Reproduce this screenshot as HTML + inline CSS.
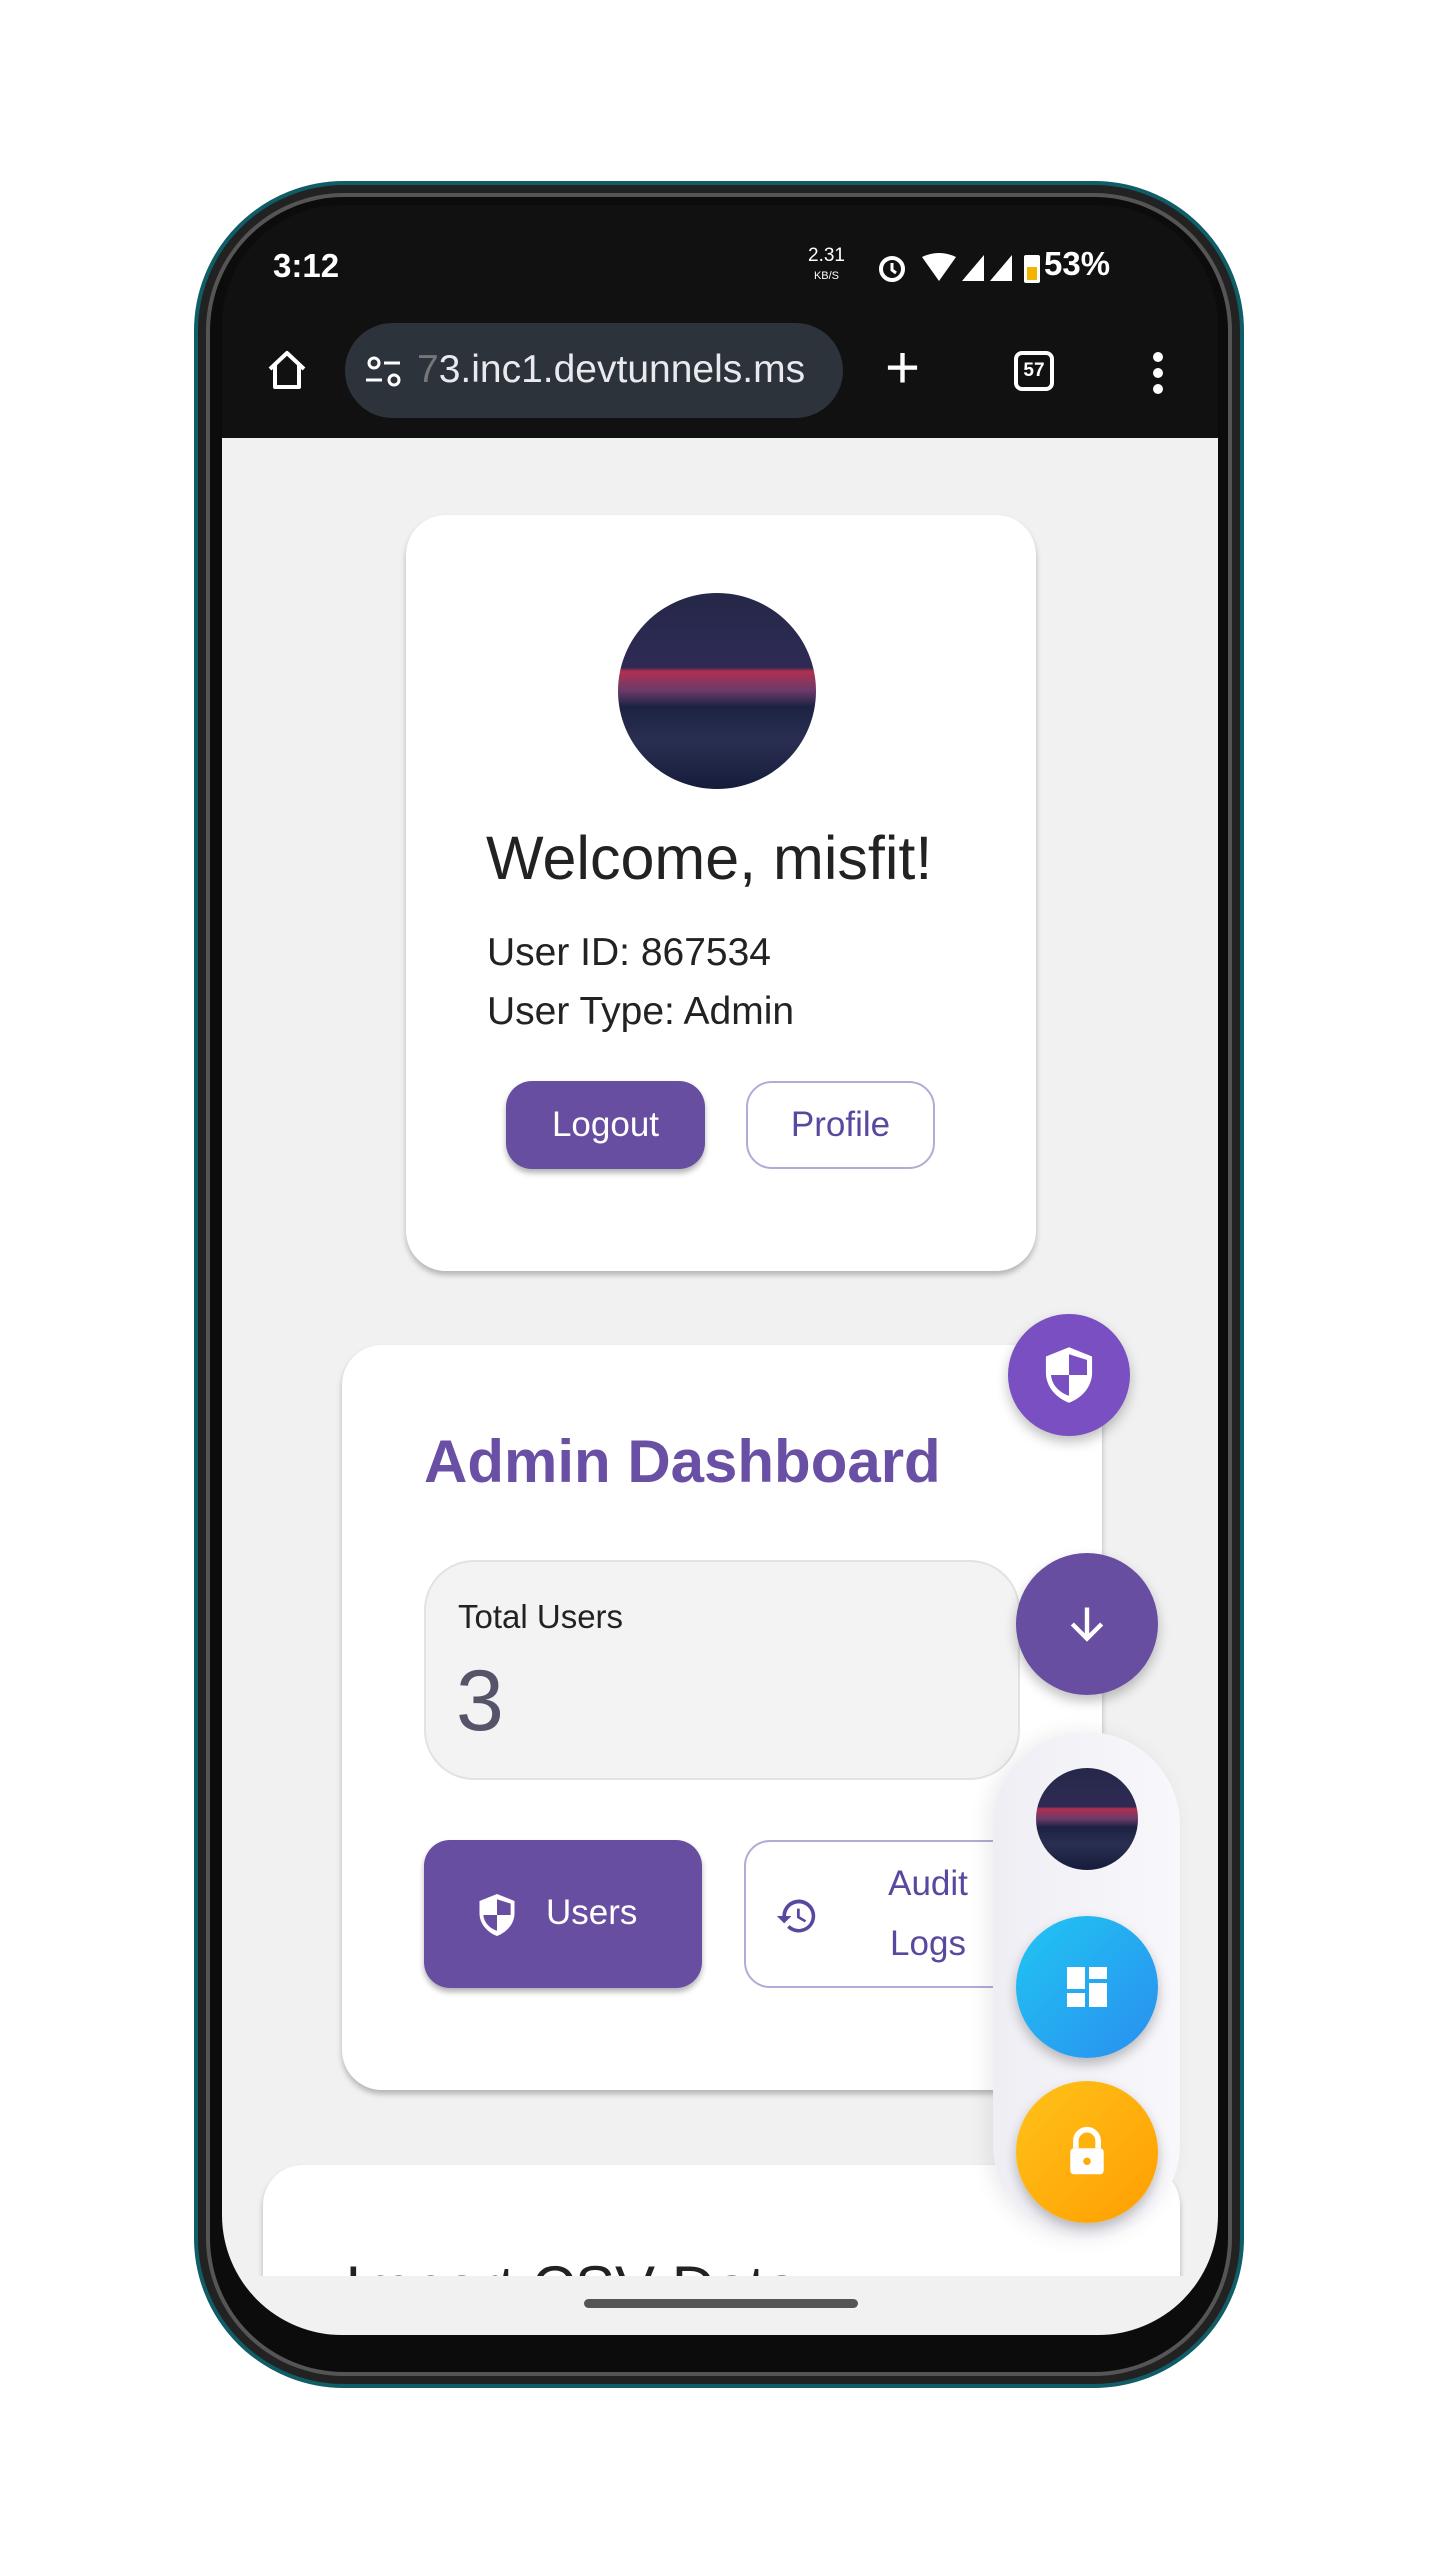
<!DOCTYPE html>
<html><head><meta charset="utf-8"><style>
*{margin:0;padding:0;box-sizing:border-box}
html,body{width:1440px;height:2565px;overflow:hidden}
body{background:#fff;position:relative;font-family:"Liberation Sans",sans-serif}
.a{position:absolute}
.phone{left:194px;top:181px;width:1050px;height:2207px;border-radius:150px;background:#0c0c0c;border:4px solid #0f5d66;box-shadow:inset 0 0 0 8px #222,inset 0 0 0 12px #555}
.screen{left:222px;top:205px;width:996px;height:2130px;border-radius:120px;background:#111;overflow:hidden}
.content{left:0;top:233px;width:996px;height:1838px;background:#f1f1f1;overflow:hidden}
.card{background:#fff;border-radius:40px;box-shadow:0 4px 6px rgba(0,0,0,.25)}
.fab{border-radius:50%;display:flex;align-items:center;justify-content:center;box-shadow:0 6px 12px rgba(0,0,0,.25)}
.av{border-radius:50%;background:linear-gradient(180deg,#252848 0%,#2e2a55 38%,#b03050 40%,#6a3a6a 50%,#1c2242 58%,#2a2f52 75%,#161c3a 100%)}
</style></head><body>
<div class="a phone"></div>
<div class="a screen">
  <div class="a" style="left:51px;top:42px;color:#fff;font-size:33px;font-weight:bold">3:12</div>
  <div class="a" style="left:586px;top:42px;color:#fff;font-size:19px;line-height:18px;text-align:center">2.31<br><span style="font-size:11px">KB/S</span></div>
  <svg class="a" style="left:650px;top:42px" width="300" height="40" viewBox="0 0 300 40">
    <circle cx="20" cy="22" r="11" fill="none" stroke="#fff" stroke-width="4"/><path d="M20 16v7l4 3" stroke="#fff" stroke-width="3" fill="none"/>
    <path d="M50 10 Q67 2 84 10 L67 34Z" fill="#fff"/>
    <path d="M90 34 L112 8 V34Z" fill="#fff"/><path d="M118 34 L140 8 V34Z" fill="#fff"/>
    <rect x="152" y="8" width="16" height="28" rx="2" fill="#fff"/><rect x="155" y="20" width="10" height="13" fill="#f3b400"/>
  </svg>
  <div class="a" style="left:822px;top:40px;color:#fff;font-size:33px;font-weight:bold">53%</div>
  <svg class="a" style="left:40px;top:140px" width="50" height="50" viewBox="0 0 50 50"><path d="M8 24 L25 8 L42 24 M13 20 V42 H37 V20" fill="none" stroke="#fff" stroke-width="4" stroke-linejoin="round"/></svg>
  <div class="a" style="left:123px;top:118px;width:498px;height:95px;border-radius:48px;background:#2d333b"></div>
  <svg class="a" style="left:140px;top:147px" width="44" height="40" viewBox="0 0 44 40"><circle cx="12" cy="11" r="5" fill="none" stroke="#fff" stroke-width="3"/><path d="M22 11h16M4 28h16" stroke="#fff" stroke-width="3"/><circle cx="32" cy="28" r="5" fill="none" stroke="#fff" stroke-width="3"/></svg>
  <div class="a" style="left:195px;top:143px;color:#e8eaed;font-size:39px"><span style="color:#777">7</span>3.inc1.devtunnels.ms</div>
  <div class="a" style="left:663px;top:128px;color:#fff;font-size:60px;font-weight:300">+</div>
  <div class="a" style="left:792px;top:146px;width:40px;height:40px;border:4px solid #fff;border-radius:8px;color:#fff;font-size:19px;font-weight:bold;text-align:center;line-height:32px">57</div>
  <svg class="a" style="left:926px;top:145px" width="20" height="46"><circle cx="10" cy="7" r="5" fill="#fff"/><circle cx="10" cy="23" r="5" fill="#fff"/><circle cx="10" cy="39" r="5" fill="#fff"/></svg>

  <div class="a content">
    <div class="a card" style="left:184px;top:77px;width:630px;height:756px">
      <div class="a av" style="left:212px;top:78px;width:198px;height:196px"></div>
      <div class="a" style="left:80px;top:308px;font-size:61px;color:#222">Welcome, misfit!</div>
      <div class="a" style="left:81px;top:416px;font-size:39px;color:#222">User ID: 867534</div>
      <div class="a" style="left:81px;top:475px;font-size:39px;color:#222">User Type: Admin</div>
      <div class="a" style="left:100px;top:566px;width:199px;height:88px;border-radius:26px;background:#674ea1;color:#fff;font-size:35px;text-align:center;line-height:88px;box-shadow:0 4px 6px rgba(0,0,0,.3)">Logout</div>
      <div class="a" style="left:340px;top:566px;width:189px;height:88px;border-radius:26px;border:2px solid #b5a9d6;color:#5a47a0;font-size:35px;text-align:center;line-height:84px">Profile</div>
    </div>
    <div class="a card" style="left:120px;top:907px;width:760px;height:745px">
      <div class="a" style="left:82px;top:82px;font-size:60px;font-weight:bold;color:#6a50a5">Admin Dashboard</div>
      <div class="a" style="left:82px;top:215px;width:596px;height:220px;border-radius:50px;background:#f3f3f3;border:2px solid #e2e2e2">
        <div class="a" style="left:32px;top:36px;font-size:33px;color:#222">Total Users</div>
        <div class="a" style="left:30px;top:90px;font-size:86px;color:#555468">3</div>
      </div>
      <div class="a" style="left:82px;top:495px;width:278px;height:148px;border-radius:26px;background:#674ea1;box-shadow:0 4px 6px rgba(0,0,0,.3)">
        <svg class="a" style="left:52px;top:52px" width="42" height="46" viewBox="0 0 24 26"><path d="M12 1 L22 5 V12 C22 18 17.5 23 12 25 C6.5 23 2 18 2 12 V5Z" fill="#fff"/><path d="M12 4 V13 H4.2 C4.5 17 7.5 20.5 12 22 V13 H19.8 V6.5Z" fill="#674ea1"/></svg>
        <div class="a" style="left:122px;top:53px;font-size:35px;color:#fff">Users</div>
      </div>
      <div class="a" style="left:402px;top:495px;width:320px;height:148px;border-radius:26px;border:2px solid #b5a9d6">
        <svg class="a" style="left:28px;top:52px" width="46" height="44" viewBox="0 0 24 24"><path d="M13 3a9 9 0 0 0-9 9H1l4 4 4-4H6a7 7 0 1 1 2 5l-1.4 1.4A9 9 0 1 0 13 3zm-1 5v5l4.3 2.5.7-1.2-3.5-2.1V8z" fill="#5a47a0"/></svg>
        <div class="a" style="left:112px;top:12px;width:140px;text-align:center;font-size:35px;line-height:60px;color:#5a47a0">Audit<br>Logs</div>
      </div>
    </div>
    <div class="a card" style="left:41px;top:1727px;width:917px;height:400px">
      <div class="a" style="left:82px;top:88px;font-size:60px;color:#222">Import CSV Data</div>
    </div>
    <div class="a" style="left:771px;top:1294px;width:187px;height:506px;border-radius:94px;background:linear-gradient(90deg,#eeeef4,#f8f8fc);box-shadow:-6px 0 20px rgba(0,0,0,.08)"></div>
    <div class="a av" style="left:814px;top:1330px;width:102px;height:102px"></div>
    <div class="a fab" style="left:794px;top:1478px;width:142px;height:142px;background:linear-gradient(135deg,#20c6f2,#2a8ef0)">
      <svg width="48" height="48" viewBox="0 0 24 24"><path d="M2 2h9v11H2zM13 2h9v6h-9zM13 10h9v12h-9zM2 15h9v7H2z" fill="#fff"/></svg>
    </div>
    <div class="a fab" style="left:794px;top:1643px;width:142px;height:142px;background:linear-gradient(135deg,#ffc21a,#ff9e00)">
      <svg width="46" height="52" viewBox="0 0 24 28"><path d="M6 12V8a6 6 0 0 1 12 0v4" fill="none" stroke="#fff" stroke-width="3"/><rect x="3" y="12" width="18" height="14" rx="2" fill="#fff"/><circle cx="12" cy="19" r="2" fill="#ffaa00"/></svg>
    </div>
    <div class="a fab" style="left:786px;top:876px;width:122px;height:122px;background:#7a4fc2">
      <svg width="56" height="60" viewBox="0 0 24 26"><path d="M12 1 L22 5 V12 C22 18 17.5 23 12 25 C6.5 23 2 18 2 12 V5Z" fill="#fff"/><path d="M12 4 V13 H4.2 C4.5 17 7.5 20.5 12 22 V13 H19.8 V6.5Z" fill="#7a4fc2"/></svg>
    </div>
    <div class="a fab" style="left:794px;top:1115px;width:142px;height:142px;background:#674ea1">
      <svg width="44" height="44" viewBox="0 0 24 24"><path d="M12 3v17M4 12l8 8 8-8" fill="none" stroke="#fff" stroke-width="2.4"/></svg>
    </div>
  </div>
  <div class="a" style="left:0;top:2071px;width:996px;height:80px;background:#f1f1f1"></div>
  <div class="a" style="left:362px;top:2094px;width:274px;height:9px;border-radius:5px;background:#555"></div>
</div>
</body></html>
